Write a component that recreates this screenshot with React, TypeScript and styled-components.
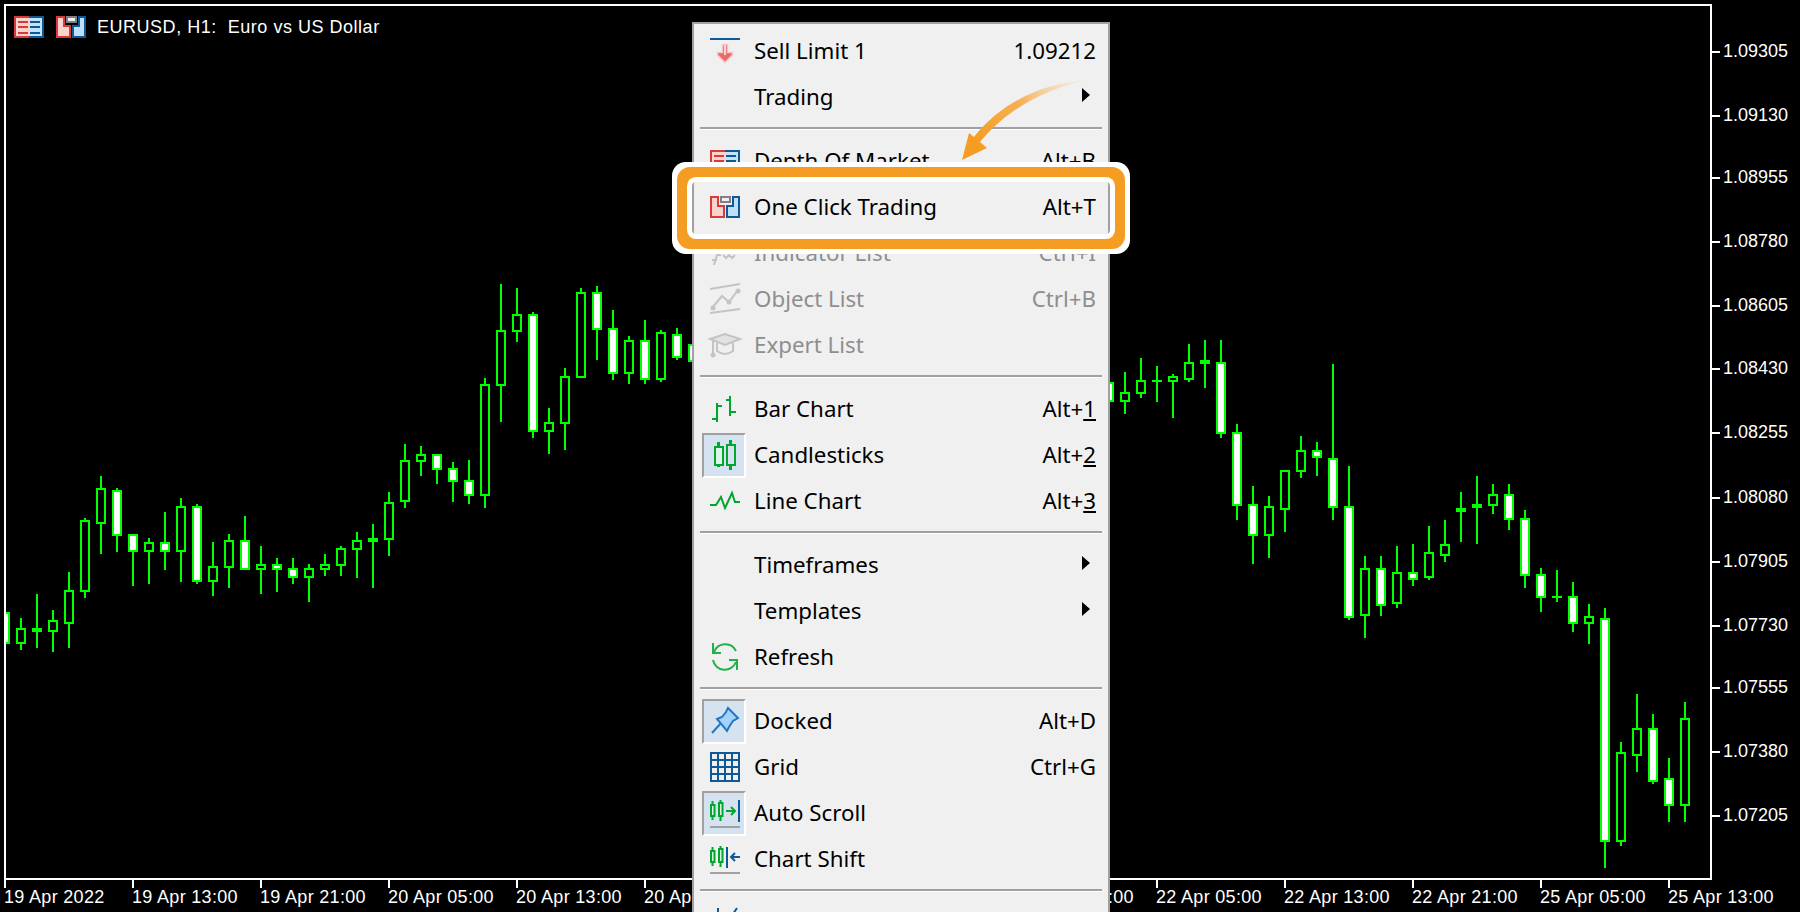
import React from "react";
import styled, { createGlobalStyle } from "styled-components";

const GREEN = "#00ff00";
const ICON_GREEN = "#00a62e";
const ICON_BLUE = "#0f5a96";
const ICON_RED = "#d83a3a";
const OFF = "#c4c4c4";

const Global = createGlobalStyle`
  html, body { margin: 0; padding: 0; background: #000; }
  #root { width: 1800px; height: 912px; }
`;

const Page = styled.div`
  position: relative;
  width: 1800px;
  height: 912px;
  overflow: hidden;
  background: #000;
  display: grid;
  grid-template-columns: 1712px 88px;
  grid-template-rows: 880px 32px;
  font-family: "Liberation Sans", Arial, sans-serif;
  color: #fff;
`;

const ChartFrame = styled.div`
  position: relative;
  margin: 4px 0 0 4px;
  border: 2px solid #fff;
  overflow: hidden;
`;

const CandleCanvas = styled.svg`
  display: block;
  width: 1704px;
  height: 872px;
`;

const ChartTitle = styled.div`
  position: absolute;
  left: 8px;
  top: 10px;
  display: flex;
  align-items: center;
  gap: 12px;
  height: 22px;
`;

const TitleText = styled.span`
  margin-left: -1px;
  font-size: 18px;
  letter-spacing: 0.52px;
  white-space: pre;
`;

const PriceAxis = styled.div`
  position: relative;
`;

const PriceTick = styled.div`
  position: absolute;
  left: 0;
  height: 20px;
  display: flex;
  align-items: center;
  gap: 3px;
  font-size: 18px;
  &::before {
    content: "";
    width: 8px;
    height: 2px;
    background: #fff;
    margin-top: 2px;
  }
`;

const TimeAxis = styled.div`
  grid-column: 1 / 3;
  display: flex;
  padding-left: 4px;
  margin-top: -1px;
`;

const TimeTick = styled.div`
  position: relative;
  flex: 0 0 128px;
  padding: 10px 0 0 0;
  font-size: 18px;
  letter-spacing: 0.32px;
  white-space: nowrap;
  line-height: 17px;
  &::before {
    content: "";
    position: absolute;
    left: 0;
    top: 0;
    width: 2px;
    height: 9px;
    background: #fff;
  }
`;

const Menu = styled.div`
  position: absolute;
  left: 692px;
  top: 22px;
  width: 418px;
  height: 900px;
  box-sizing: border-box;
  border: 2px solid #a0a0a0;
  padding-top: 4px;
  background: #f0f0f0;
  font-family: "Noto Sans", "Open Sans", sans-serif;
  font-size: 22.3px;
  color: #000;
`;

const Row = styled.div<{ $off?: boolean }>`
  height: 46px;
  display: flex;
  align-items: center;
  padding: 0 12px 0 8px;
  color: ${(p) => (p.$off ? "#8e8e8e" : "#000")};
`;

const IconCell = styled.div<{ $checked?: boolean }>`
  flex: 0 0 44px;
  height: 45px;
  box-sizing: border-box;
  display: flex;
  align-items: center;
  padding-left: 6px;
  margin-right: 8px;
  border: 2px solid transparent;
  ${(p) =>
    p.$checked &&
    `background: #d5e3f1;
     border-color: #a0a0a0 #fff #fff #a0a0a0;`}
`;

const Label = styled.span`
  flex: 1;
  margin-top: -2px;
  white-space: nowrap;
`;

const Shortcut = styled.span`
  margin-top: -2px;
  white-space: nowrap;
`;

const SubmenuArrow = styled.span`
  width: 0;
  height: 0;
  margin-right: 6px;
  border-left: 8px solid #000;
  border-top: 7px solid transparent;
  border-bottom: 7px solid transparent;
  transform: translateY(-2px);
`;

const Separator = styled.div`
  height: 18px;
  margin: 0 6px;
  display: flex;
  align-items: center;
  &::before {
    content: "";
    flex: 1;
    height: 2px;
    background: #a0a0a0;
    border-bottom: 1px solid #fff;
    margin-top: -1px;
  }
`;

const Icon = styled.svg`
  display: block;
  flex: none;
  overflow: visible;
  shape-rendering: geometricPrecision;
`;

const Callout = styled.svg`
  position: absolute;
  left: 950px;
  top: 70px;
  width: 150px;
  height: 100px;
`;

const Highlight = styled.div`
  position: absolute;
  left: 692px;
  top: 182px;
  width: 418px;
  height: 52px;
  border-radius: 4px;
  box-shadow: 0 0 0 5px #fff, 0 0 0 15px #f59c23, 0 0 0 20px #fff;
`;

type C = [number, number, number, number, number, number];
const segment = (x0: number, y0: number, rows: C[]) =>
  rows.map(([x, hi, top, bot, lo, white]) => ({
    x: x0 + x / 3,
    hi: y0 + hi / 3,
    top: y0 + top / 3,
    bot: y0 + bot / 3,
    lo: y0 + lo / 3,
    white: !!white,
  }));

const candles = [
  ...segment(0, 270, [
    [15, 1026, 1026, 1122, 1122, 1],
    [63, 1044, 1074, 1122, 1140, 0],
    [111, 972, 1074, 1086, 1134, 0],
    [159, 1020, 1050, 1086, 1146, 0],
    [207, 906, 960, 1062, 1134, 0],
    [255, 744, 750, 966, 984, 0],
    [303, 618, 654, 762, 852, 0],
    [351, 654, 660, 798, 846, 1],
    [399, 792, 792, 846, 948, 1],
    [447, 804, 816, 846, 942, 0],
    [495, 726, 816, 846, 900, 1],
    [543, 684, 708, 846, 936, 0],
    [591, 702, 708, 936, 942, 1],
    [639, 816, 888, 936, 978, 0],
    [687, 792, 810, 894, 954, 0],
    [735, 738, 810, 900, 900, 1],
    [783, 828, 882, 900, 972, 0],
    [831, 864, 882, 900, 966, 1],
    [879, 864, 894, 924, 942, 1],
    [927, 882, 894, 924, 996, 0],
    [975, 852, 882, 900, 918, 0],
    [1023, 828, 834, 888, 918, 0],
  ]),
  ...segment(340, 270, [
    [51, 786, 810, 840, 924, 0],
    [99, 762, 804, 816, 954, 0],
    [147, 666, 696, 810, 858, 0],
    [195, 522, 570, 696, 714, 0],
    [243, 528, 552, 576, 618, 0],
    [291, 552, 552, 600, 642, 1],
    [339, 576, 594, 636, 696, 1],
    [387, 570, 630, 678, 702, 1],
    [435, 324, 342, 678, 714, 0],
    [483, 42, 180, 348, 456, 0],
    [531, 54, 132, 186, 216, 0],
    [579, 126, 132, 486, 504, 1],
    [627, 414, 456, 486, 552, 0],
    [675, 294, 318, 462, 540, 0],
    [723, 54, 66, 324, 324, 0],
    [771, 48, 66, 180, 270, 1],
    [819, 120, 174, 312, 330, 1],
    [867, 198, 210, 312, 342, 0],
    [915, 150, 210, 330, 342, 1],
    [963, 180, 186, 330, 336, 0],
    [1011, 174, 192, 264, 270, 1],
    [1059, 222, 222, 276, 276, 1],
  ]),
  ...segment(1100, 320, [
    [27, 186, 186, 246, 246, 1],
    [75, 156, 216, 246, 282, 0],
    [123, 114, 180, 222, 234, 0],
    [171, 138, 180, 186, 246, 0],
    [219, 162, 168, 186, 294, 0],
    [267, 72, 126, 180, 186, 0],
    [315, 60, 120, 132, 204, 0],
    [363, 60, 126, 342, 354, 1],
    [411, 312, 336, 558, 600, 1],
    [459, 498, 552, 648, 732, 1],
    [507, 528, 558, 648, 714, 0],
    [555, 450, 450, 570, 636, 0],
    [603, 348, 390, 456, 474, 0],
    [651, 366, 390, 414, 468, 1],
    [699, 132, 414, 564, 600, 1],
    [747, 438, 558, 894, 900, 1],
    [795, 708, 744, 888, 954, 0],
    [843, 708, 744, 858, 888, 1],
    [891, 678, 756, 852, 864, 0],
    [939, 672, 756, 780, 798, 1],
    [987, 618, 696, 774, 780, 0],
    [1035, 600, 672, 708, 726, 0],
  ]),
  ...segment(1440, 460, [
    [63, 96, 144, 156, 246, 0],
    [111, 48, 132, 144, 252, 0],
    [159, 72, 102, 138, 162, 0],
    [207, 72, 102, 180, 210, 1],
    [255, 150, 174, 348, 384, 1],
    [303, 324, 342, 414, 456, 1],
    [351, 330, 408, 414, 426, 0],
    [399, 366, 408, 492, 516, 1],
    [447, 432, 468, 492, 552, 0],
    [495, 444, 474, 1146, 1224, 1],
    [543, 846, 876, 1146, 1158, 0],
    [591, 702, 804, 888, 936, 0],
    [639, 762, 804, 966, 972, 1],
    [687, 894, 954, 1038, 1086, 1],
    [735, 726, 774, 1038, 1086, 0],
  ]),
];

const prices: [string, number][] = [
  ["1.09305", 51],
  ["1.09130", 115],
  ["1.08955", 177],
  ["1.08780", 241],
  ["1.08605", 305],
  ["1.08430", 368],
  ["1.08255", 432],
  ["1.08080", 497],
  ["1.07905", 561],
  ["1.07730", 625],
  ["1.07555", 687],
  ["1.07380", 751],
  ["1.07205", 815],
];

const times = [
  "19 Apr 2022",
  "19 Apr 13:00",
  "19 Apr 21:00",
  "20 Apr 05:00",
  "20 Apr 13:00",
  "20 Apr 21:00",
  "21 Apr 05:00",
  "21 Apr 13:00",
  "21 Apr 21:00",
  "22 Apr 05:00",
  "22 Apr 13:00",
  "22 Apr 21:00",
  "25 Apr 05:00",
  "25 Apr 13:00",
];

const DepthIcon = () => (
  <Icon width="30" height="22" viewBox="0 0 30 22">
    <rect x="0" y="0" width="15" height="22" fill="#fbd3cc" />
    <rect x="15" y="0" width="15" height="22" fill="#c4e2fa" />
    <path d="M15 1H1V21H15" fill="none" stroke={ICON_RED} strokeWidth="2" />
    <path d="M15 1H29V21H15" fill="none" stroke={ICON_BLUE} strokeWidth="2" />
    <path d="M4 6H14M4 11H14M4 17H14" stroke={ICON_RED} strokeWidth="2" />
    <path d="M16 6H26M16 11H26M16 17H26" stroke={ICON_BLUE} strokeWidth="2" />
  </Icon>
);

const OneClickIcon = () => (
  <Icon width="30" height="22" viewBox="0 0 30 22">
    <path d="M1 1H8V10H14V21H1Z" fill="#fbd3cc" stroke={ICON_RED} strokeWidth="2" />
    <path d="M29 1H23V10H17V21H29Z" fill="#bfe0fa" stroke={ICON_BLUE} strokeWidth="2" />
    <rect x="11" y="1" width="9" height="5" fill="#f0f0f0" stroke="#808080" strokeWidth="2" />
  </Icon>
);

const Box = ({ children }: { children: React.ReactNode }) => (
  <Icon width="30" height="30" viewBox="0 0 30 30">
    {children}
  </Icon>
);

const SellIcon = () => (
  <Box>
    <rect x="0" y="2" width="30" height="2" fill={ICON_BLUE} />
    <path d="M12.5 8.5H17.5V16.5H22.5V19L15 26.5L7.5 19V16.5H12.5Z" fill="#e86a6a" stroke="#f6c4c4" strokeWidth="1.5" />
    <rect x="14" y="9" width="2" height="10" fill="#f9d6d6" />
  </Box>
);

const IndicatorIcon = () => (
  <Box>
    <path d="M2 22H7M4 27L7 17H11M13 17L16 20L19 17L22 20L25 17" fill="none" stroke={OFF} strokeWidth="2" />
  </Box>
);

const ObjectIcon = () => (
  <Box>
    <path d="M0 5L30 0M0 29L30 25" stroke={OFF} strokeWidth="2" />
    <path d="M2 24L12 12L19 18L28 6" fill="none" stroke={OFF} strokeWidth="2" />
    <circle cx="3" cy="24" r="2.5" fill={OFF} />
    <circle cx="19" cy="18" r="2.5" fill={OFF} />
    <circle cx="28" cy="7" r="2.5" fill={OFF} />
  </Box>
);

const ExpertIcon = () => (
  <Box>
    <path d="M7 13V21Q15 27 23 21V13" fill="none" stroke={OFF} strokeWidth="2" />
    <path d="M0 9L15 4L30 9L15 15Z" fill="#e2e2e2" stroke={OFF} strokeWidth="2" />
    <path d="M3 10V24" stroke={OFF} strokeWidth="2" />
    <circle cx="3" cy="25" r="2.5" fill={OFF} />
  </Box>
);

const BarIcon = () => (
  <Box>
    <path d="M7 9V28M2 25H7M7 12H12M20 2V22M16 6H20M20 18H26" fill="none" stroke={ICON_GREEN} strokeWidth="2" />
  </Box>
);

const CandleIcon = () => (
  <Box>
    <path d="M8.5 2V7M8.5 25V27M20.5 0V5M20.5 25V30" stroke={ICON_GREEN} strokeWidth="3" />
    <rect x="5" y="7" width="8" height="18" fill="#dff5e5" stroke={ICON_GREEN} strokeWidth="2" />
    <rect x="17" y="5" width="8" height="20" fill="none" stroke={ICON_GREEN} strokeWidth="2" />
  </Box>
);

const LineIcon = () => (
  <Box>
    <path d="M0 19H6L11 11L15 22L22 7L25 16H30" fill="none" stroke={ICON_GREEN} strokeWidth="2" />
  </Box>
);

const RefreshIcon = () => (
  <Box>
    <path d="M3 1V11H11" fill="none" stroke="#22b14c" strokeWidth="2" />
    <path d="M27 28V18H19" fill="none" stroke="#22b14c" strokeWidth="2" />
    <path d="M4 10A12 12 0 0 1 26 9M3 18A12 12 0 0 0 26 20" fill="none" stroke="#22b14c" strokeWidth="2" />
  </Box>
);

const PinIcon = () => (
  <Box>
    <path d="M2 27L12 16" stroke="#1e78c8" strokeWidth="2" />
    <path d="M18 2L28 12L23 15L19 21L17 25L7 13L12 11L16 6Z" fill="#a6d2f7" stroke="#1e78c8" strokeWidth="2" />
  </Box>
);

const GridIcon = () => (
  <Box>
    <path
      d="M1 0V30M8 0V30M15 0V30M22 0V30M29 0V30M0 1H30M0 8H30M0 15H30M0 22H30M0 29H30"
      stroke={ICON_BLUE}
      strokeWidth="2"
    />
  </Box>
);

const MiniCandles = () => (
  <>
    <path d="M2.5 3V22M10.5 2V23" stroke={ICON_GREEN} strokeWidth="2" />
    <rect x="1" y="7" width="3.5" height="11" fill="#dff5e5" stroke={ICON_GREEN} strokeWidth="2" />
    <rect x="9" y="5" width="3.5" height="13" fill="#dff5e5" stroke={ICON_GREEN} strokeWidth="2" />
  </>
);

const AutoScrollIcon = () => (
  <Box>
    <MiniCandles />
    <path d="M16 13H25M21 9L25 13L21 17" fill="none" stroke={ICON_GREEN} strokeWidth="2" />
    <path d="M29 2V24" stroke={ICON_BLUE} strokeWidth="2" />
    <path d="M0 29H30" stroke="#a0a0a0" strokeWidth="2" />
  </Box>
);

const ChartShiftIcon = () => (
  <Box>
    <MiniCandles />
    <path d="M17 3V24" stroke={ICON_BLUE} strokeWidth="2" />
    <path d="M30 13H21M25 9L21 13L25 17" fill="none" stroke={ICON_BLUE} strokeWidth="2" />
    <path d="M0 29H30" stroke="#a0a0a0" strokeWidth="2" />
  </Box>
);

const VolumesIcon = () => (
  <Box>
    <path d="M8 6V0M23 6L27 0" stroke={ICON_BLUE} strokeWidth="2" />
  </Box>
);

type Item = {
  label?: string;
  icon?: React.ReactNode;
  checked?: boolean;
  off?: boolean;
  sub?: boolean;
  keys?: React.ReactNode;
  sep?: boolean;
};

const items: Item[] = [
  { label: "Sell Limit 1", icon: <SellIcon />, keys: "1.09212" },
  { label: "Trading", sub: true },
  { sep: true },
  { label: "Depth Of Market", icon: <DepthIcon />, keys: "Alt+B" },
  { label: "One Click Trading", icon: <OneClickIcon />, keys: "Alt+T" },
  { label: "Indicator List", icon: <IndicatorIcon />, keys: "Ctrl+I", off: true },
  { label: "Object List", icon: <ObjectIcon />, keys: "Ctrl+B", off: true },
  { label: "Expert List", icon: <ExpertIcon />, off: true },
  { sep: true },
  { label: "Bar Chart", icon: <BarIcon />, keys: <>Alt+<u>1</u></> },
  { label: "Candlesticks", icon: <CandleIcon />, checked: true, keys: <>Alt+<u>2</u></> },
  { label: "Line Chart", icon: <LineIcon />, keys: <>Alt+<u>3</u></> },
  { sep: true },
  { label: "Timeframes", sub: true },
  { label: "Templates", sub: true },
  { label: "Refresh", icon: <RefreshIcon /> },
  { sep: true },
  { label: "Docked", icon: <PinIcon />, checked: true, keys: "Alt+D" },
  { label: "Grid", icon: <GridIcon />, keys: "Ctrl+G" },
  { label: "Auto Scroll", icon: <AutoScrollIcon />, checked: true },
  { label: "Chart Shift", icon: <ChartShiftIcon /> },
  { sep: true },
  { icon: <VolumesIcon /> },
];

export default function App() {
  return (
    <Page>
      <Global />
      <ChartFrame>
        <CandleCanvas viewBox="6 6 1704 872" shapeRendering="crispEdges">
          {candles.map((c) => (
            <g key={c.x}>
              <rect x={c.x - 1} y={c.hi} width="2" height={c.lo - c.hi} fill={GREEN} />
              <rect x={c.x - 5} y={c.top} width="10" height={c.bot - c.top} fill={GREEN} />
              {c.bot - c.top > 4 && (
                <rect
                  x={c.x - 3}
                  y={c.top + 2}
                  width="6"
                  height={c.bot - c.top - 4}
                  fill={c.white ? "#fff" : "#000"}
                />
              )}
            </g>
          ))}
        </CandleCanvas>
        <ChartTitle>
          <DepthIcon />
          <OneClickIcon />
          <TitleText>{"EURUSD, H1:  Euro vs US Dollar"}</TitleText>
        </ChartTitle>
      </ChartFrame>
      <PriceAxis>
        {prices.map(([p, y]) => (
          <PriceTick key={p} style={{ top: y - 10 }}>
            {p}
          </PriceTick>
        ))}
      </PriceAxis>
      <TimeAxis>
        {times.map((t) => (
          <TimeTick key={t}>{t}</TimeTick>
        ))}
      </TimeAxis>
      <Menu>
        {items.map((it, i) =>
          it.sep ? (
            <Separator key={i} />
          ) : (
            <Row key={i} $off={it.off}>
              <IconCell $checked={it.checked}>{it.icon}</IconCell>
              <Label>{it.label}</Label>
              {it.keys && <Shortcut>{it.keys}</Shortcut>}
              {it.sub && <SubmenuArrow />}
            </Row>
          )
        )}
      </Menu>
      <Callout viewBox="0 0 150 100">
        <defs>
          <linearGradient id="swoosh" gradientUnits="userSpaceOnUse" x1="25" y1="70" x2="138" y2="10">
            <stop offset="0" stopColor="#f59c23" />
            <stop offset="0.45" stopColor="#f7b056" />
            <stop offset="1" stopColor="#fad9ad" stopOpacity="0.1" />
          </linearGradient>
        </defs>
        <path
          d="M138 10C100 12 55 28 24 67L19 63L12 90L37 78L30 72C55 42 90 20 138 10Z"
          fill="url(#swoosh)"
        />
      </Callout>
      <Highlight />
    </Page>
  );
}
